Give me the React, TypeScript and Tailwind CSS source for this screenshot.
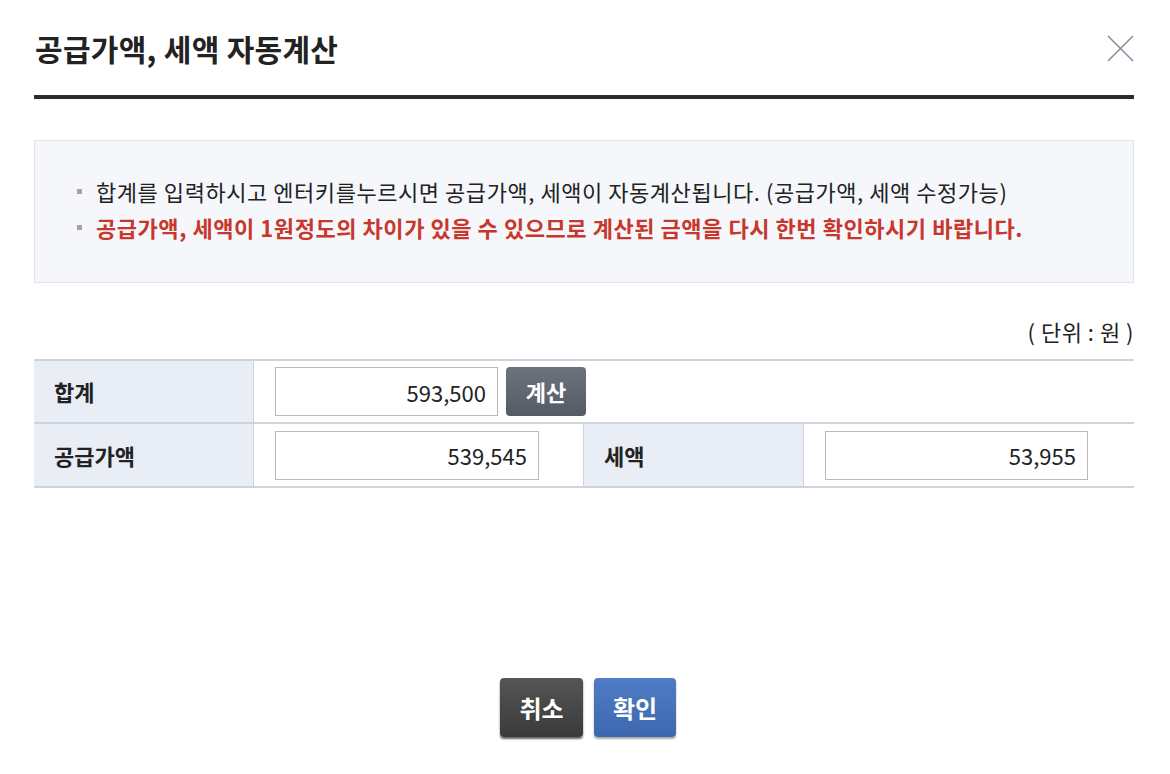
import { useState } from "react";

const font = {
  fontFamily: '"Noto Sans CJK KR", "Noto Sans", sans-serif',
};

function App() {
  const [total, setTotal] = useState("593,500");
  const [supply, setSupply] = useState("539,545");
  const [tax, setTax] = useState("53,955");

  const handleCalc = () => {
    const n = Number(total.replace(/,/g, ""));
    if (!n) return;
    const s = Math.round(n / 1.1);
    setSupply(s.toLocaleString());
    setTax((n - s).toLocaleString());
  };

  return (
    <div className="w-[1170px] h-[774px] bg-white text-[#222] pl-[34px] pr-[36px] pt-[28px]" style={font}>
      {/* header */}
      <div className="flex items-center justify-between h-[40px]">
        <h1 className="text-[30px] font-bold tracking-[0.3px] pl-[1px]">공급가액, 세액 자동계산</h1>
        <button className="w-[28px] h-[28px] flex items-center justify-center">
          <svg width="27" height="27" viewBox="0 0 27 27" stroke="#8a8fa0" strokeWidth="1.6">
            <line x1="1" y1="1" x2="26" y2="26" />
            <line x1="26" y1="1" x2="1" y2="26" />
          </svg>
        </button>
      </div>
      <div className="h-[4px] bg-[#2b2b2b] mt-[27px]" />

      {/* info box */}
      <div className="mt-[41px] h-[143px] border border-[#e0e3e8] bg-[#f5f7fb] flex flex-col justify-center gap-[5px] pl-[42px] pb-[5px]">
        <div className="flex items-center gap-[14px] text-[22px] leading-[31px] tracking-[0.55px] text-[#222]">
          <span className="w-[5px] h-[5px] bg-[#a4a4a4]" />
          <span>합계를 입력하시고 엔터키를누르시면 공급가액, 세액이 자동계산됩니다. (공급가액, 세액 수정가능)</span>
        </div>
        <div className="flex items-center gap-[14px] text-[22px] leading-[31px] tracking-[0.55px] font-bold text-[#c8372c]">
          <span className="w-[5px] h-[5px] bg-[#a4a4a4]" />
          <span>공급가액, 세액이 1원정도의 차이가 있을 수 있으므로 계산된 금액을 다시 한번 확인하시기 바랍니다.</span>
        </div>
      </div>

      <div className="text-right text-[22px] tracking-[0.5px] mt-[33px] h-[30px] leading-[30px]">( 단위 : 원 )</div>

      {/* table */}
      <div className="mt-[13px] border-t-2 border-[#cfd4dc]">
        <div className="flex h-[63px] border-b-2 border-[#cfd4dc]">
          <div className="w-[220px] bg-[#e9edf5] border-r border-[#cfd4dc] flex items-center pl-[20px] text-[22px] font-bold">합계</div>
          <div className="flex items-center pl-[21px] gap-[8px]">
            <input
              value={total}
              onChange={(e) => setTotal(e.target.value)}
              onKeyDown={(e) => e.key === "Enter" && handleCalc()}
              className="w-[223px] h-[49px] border border-[#bdb8b4] text-right pr-[11px] text-[22px] outline-none"
              style={font}
            />
            <button
              onClick={handleCalc}
              className="w-[80px] h-[49px] rounded-[4px] bg-gradient-to-b from-[#6c737d] to-[#555b65] text-white text-[22px] font-bold"
            >
              계산
            </button>
          </div>
        </div>
        <div className="flex h-[64px] border-b-2 border-[#cfd4dc]">
          <div className="w-[220px] bg-[#e9edf5] border-r border-[#cfd4dc] flex items-center pl-[20px] text-[22px] font-bold">공급가액</div>
          <div className="w-[330px] flex items-center pl-[21px] border-r border-[#cfd4dc]">
            <input
              value={supply}
              onChange={(e) => setSupply(e.target.value)}
              className="w-[264px] h-[49px] border border-[#bdb8b4] text-right pr-[11px] text-[22px] outline-none"
              style={font}
            />
          </div>
          <div className="w-[220px] bg-[#e9edf5] border-r border-[#cfd4dc] flex items-center pl-[20px] text-[22px] font-bold">세액</div>
          <div className="flex items-center pl-[21px]">
            <input
              value={tax}
              onChange={(e) => setTax(e.target.value)}
              className="w-[263px] h-[49px] border border-[#bdb8b4] text-right pr-[11px] text-[22px] outline-none"
              style={font}
            />
          </div>
        </div>
      </div>

      {/* footer buttons */}
      <div className="flex justify-center gap-[11px] mt-[190px] pl-[8px]">
        <button className="w-[83px] h-[59px] rounded-[4px] bg-gradient-to-b from-[#555] to-[#3a3a3a] text-white text-[24px] font-bold shadow-[0_2px_2px_rgba(0,0,0,0.6)]">
          취소
        </button>
        <button className="w-[82px] h-[59px] rounded-[4px] bg-gradient-to-b from-[#4f7cc4] to-[#3d68b0] text-white text-[24px] font-bold shadow-[0_2px_2px_rgba(0,0,0,0.35)]">
          확인
        </button>
      </div>
    </div>
  );
}

export default App;
